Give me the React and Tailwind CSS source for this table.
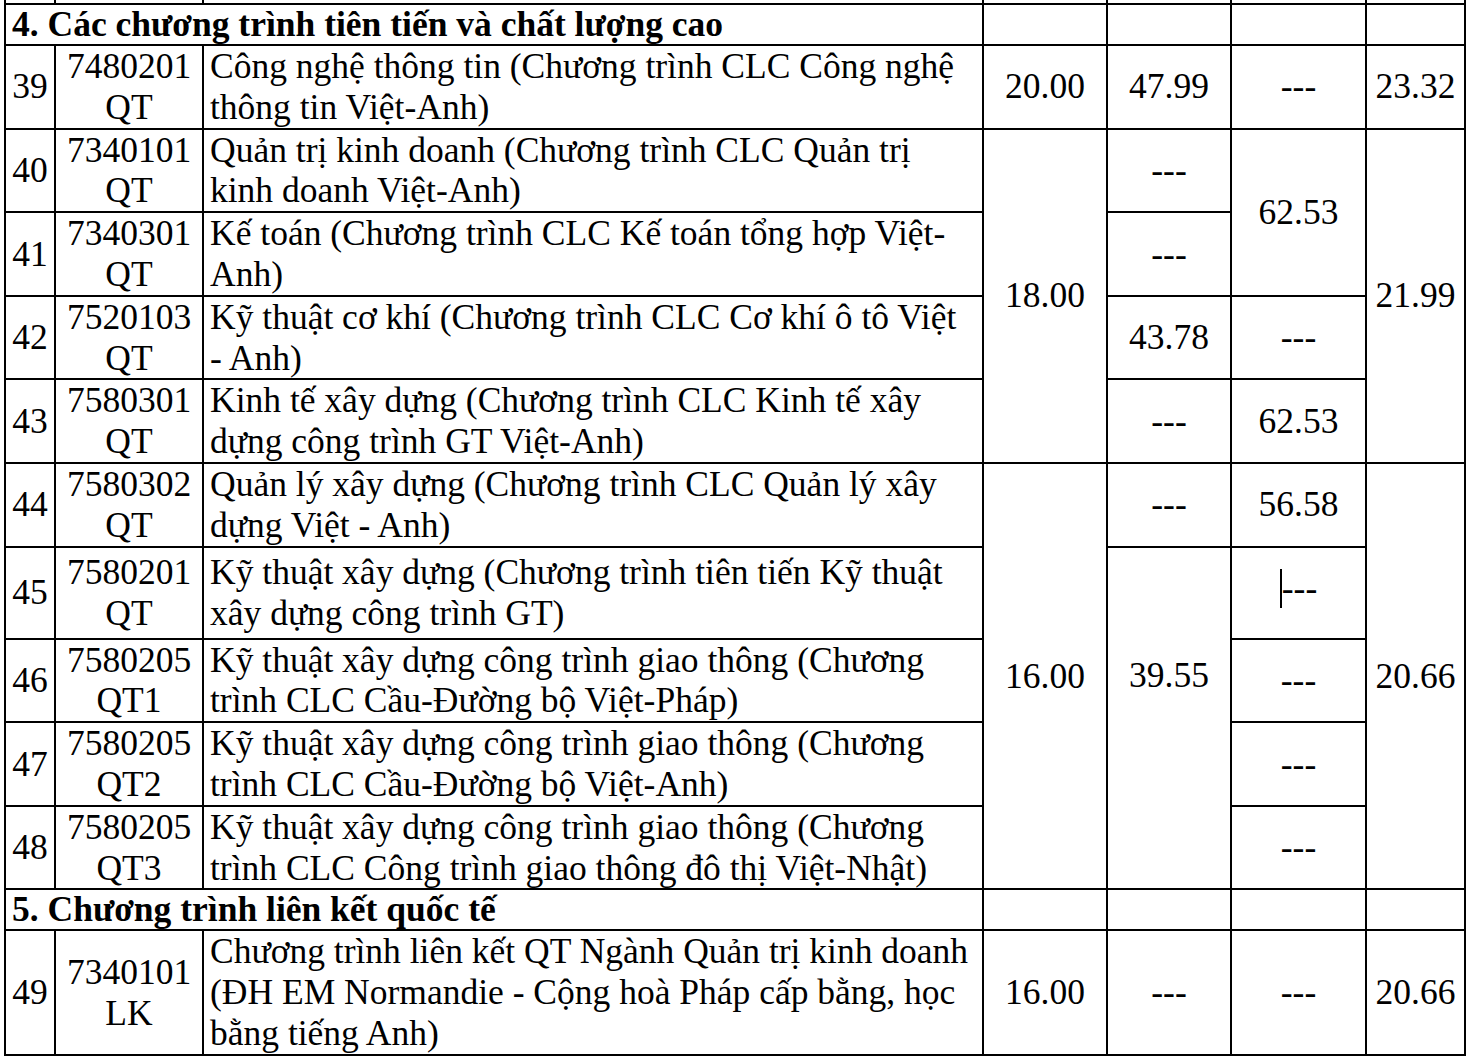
import React from "react";

const cell = "border-2 border-black align-middle p-0";
const num = `${cell} text-center`;

const Dash = () => <span>---</span>;

const Caret = () => (
  <span className="inline-flex items-center">
    <span className="inline-block w-[2px] h-[39px] bg-black" />
    <span>---</span>
  </span>
);

const Desc = ({ lines }) => (
  <td className={`${cell} pl-[6px] text-left whitespace-nowrap`}>
    {lines.map((l, i) => (
      <div key={i}>{l}</div>
    ))}
  </td>
);

const Code = ({ a, b }) => (
  <td className={num}>
    <div>{a}</div>
    <div>{b}</div>
  </td>
);

const Section = ({ title }) => (
  <tr className="leading-[39px]">
    <td colSpan={3} className={`${cell} pl-[6px] font-bold whitespace-nowrap`}>
      {title}
    </td>
    <td className={cell}></td>
    <td className={cell}></td>
    <td className={cell}></td>
    <td className={cell}></td>
  </tr>
);

export default function App() {
  return (
    <div
      className="w-[1470px] h-[1059px] overflow-hidden bg-white text-black text-[35.5px] leading-[40.8px]"
      style={{ fontFamily: '"Liberation Serif", "Times New Roman", serif' }}
    >
      <table className="table-fixed border-collapse ml-[4px] -mt-[38px] w-[1462px]">
        <colgroup>
          <col className="w-[50px]" />
          <col className="w-[148px]" />
          <col className="w-[780px]" />
          <col className="w-[124px]" />
          <col className="w-[124px]" />
          <col className="w-[135px]" />
          <col className="w-[99px]" />
        </colgroup>
        <tbody>
          {/* row cut off at the top */}
          <tr className="h-[41px]">
            <td className={cell}></td>
            <td className={cell}></td>
            <td className={cell}></td>
            <td className={cell}></td>
            <td className={cell}></td>
            <td className={cell}></td>
            <td className={cell}></td>
          </tr>

          <Section title="4. Các chương trình tiên tiến và chất lượng cao" />

          <tr>
            <td className={num}>39</td>
            <Code a="7480201" b="QT" />
            <Desc lines={["Công nghệ thông tin (Chương trình CLC Công nghệ", "thông tin Việt-Anh)"]} />
            <td className={num}>20.00</td>
            <td className={num}>47.99</td>
            <td className={num}><Dash /></td>
            <td className={num}>23.32</td>
          </tr>

          <tr>
            <td className={num}>40</td>
            <Code a="7340101" b="QT" />
            <Desc lines={["Quản trị kinh doanh (Chương trình CLC Quản trị", "kinh doanh Việt-Anh)"]} />
            <td rowSpan={4} className={num}>18.00</td>
            <td className={num}><Dash /></td>
            <td rowSpan={2} className={num}>62.53</td>
            <td rowSpan={4} className={num}>21.99</td>
          </tr>

          <tr>
            <td className={num}>41</td>
            <Code a="7340301" b="QT" />
            <Desc lines={["Kế toán (Chương trình CLC Kế toán tổng hợp Việt-", "Anh)"]} />
            <td className={num}><Dash /></td>
          </tr>

          <tr>
            <td className={num}>42</td>
            <Code a="7520103" b="QT" />
            <Desc lines={["Kỹ thuật cơ khí (Chương trình CLC Cơ khí ô tô Việt", "- Anh)"]} />
            <td className={num}>43.78</td>
            <td className={num}><Dash /></td>
          </tr>

          <tr>
            <td className={num}>43</td>
            <Code a="7580301" b="QT" />
            <Desc lines={["Kinh tế xây dựng (Chương trình CLC Kinh tế xây", "dựng công trình GT Việt-Anh)"]} />
            <td className={num}><Dash /></td>
            <td className={num}>62.53</td>
          </tr>

          <tr>
            <td className={num}>44</td>
            <Code a="7580302" b="QT" />
            <Desc lines={["Quản lý xây dựng (Chương trình CLC Quản lý xây", "dựng Việt - Anh)"]} />
            <td rowSpan={5} className={num}>16.00</td>
            <td className={num}><Dash /></td>
            <td className={num}>56.58</td>
            <td rowSpan={5} className={num}>20.66</td>
          </tr>

          <tr className="h-[92px]">
            <td className={num}>45</td>
            <Code a="7580201" b="QT" />
            <Desc lines={["Kỹ thuật xây dựng (Chương trình tiên tiến Kỹ thuật", "xây dựng công trình GT)"]} />
            <td rowSpan={4} className={`${num} pb-[86px]`}>39.55</td>
            <td className={num}><Caret /></td>
          </tr>

          <tr>
            <td className={num}>46</td>
            <Code a="7580205" b="QT1" />
            <Desc lines={["Kỹ thuật xây dựng công trình giao thông (Chương", "trình CLC Cầu-Đường bộ Việt-Pháp)"]} />
            <td className={num}><Dash /></td>
          </tr>

          <tr>
            <td className={num}>47</td>
            <Code a="7580205" b="QT2" />
            <Desc lines={["Kỹ thuật xây dựng công trình giao thông (Chương", "trình CLC Cầu-Đường bộ Việt-Anh)"]} />
            <td className={num}><Dash /></td>
          </tr>

          <tr>
            <td className={num}>48</td>
            <Code a="7580205" b="QT3" />
            <Desc lines={["Kỹ thuật xây dựng công trình giao thông (Chương", "trình CLC Công trình giao thông đô thị Việt-Nhật)"]} />
            <td className={num}><Dash /></td>
          </tr>

          <Section title="5. Chương trình liên kết quốc tế" />

          <tr>
            <td className={num}>49</td>
            <Code a="7340101" b="LK" />
            <Desc
              lines={[
                "Chương trình liên kết QT Ngành Quản trị kinh doanh",
                "(ĐH EM Normandie - Cộng hoà Pháp cấp bằng, học",
                "bằng tiếng Anh)",
              ]}
            />
            <td className={num}>16.00</td>
            <td className={num}><Dash /></td>
            <td className={num}><Dash /></td>
            <td className={num}>20.66</td>
          </tr>
        </tbody>
      </table>
    </div>
  );
}
